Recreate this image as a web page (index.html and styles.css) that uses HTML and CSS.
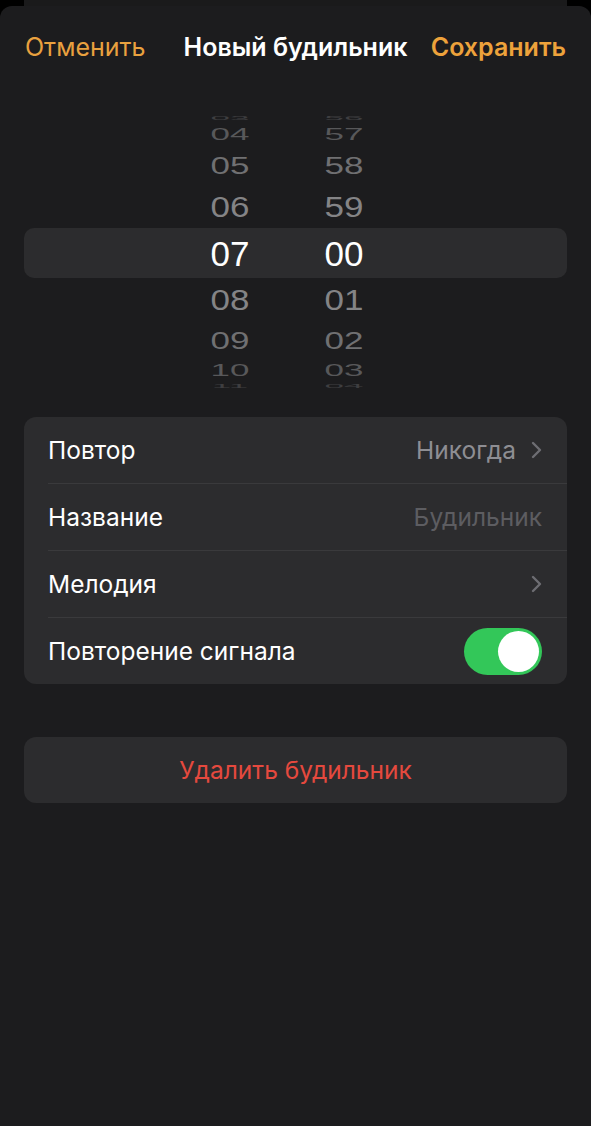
FILE: index.html
```html
<!DOCTYPE html>
<html lang="ru">

<head>
    <meta charset="UTF-8">
    <meta name="viewport" content="width=device-width, initial-scale=1.0">
    <title>Новый будильник</title>
    <link rel="stylesheet" href="styles.css">
</head>

<body>

    <div class="peek">
        <div class="peek-card"></div>
    </div>

    <div class="sheet">
        <header class="nav">
            <span class="nav-cancel">Отменить</span>
            <span class="nav-title">Новый будильник</span>
            <span class="nav-save">Сохранить</span>
        </header>

        <div class="picker">
            <div class="pick-row edge"><span>03</span><span>56</span></div>
            <div class="pick-row far r04"><span>04</span><span>57</span></div>
            <div class="pick-row mid r05"><span>05</span><span>58</span></div>
            <div class="pick-row near"><span>06</span><span>59</span></div>
            <div class="pick-row selected"><span>07</span><span>00</span></div>
            <div class="pick-row near"><span>08</span><span>01</span></div>
            <div class="pick-row mid r09"><span>09</span><span>02</span></div>
            <div class="pick-row far r10"><span>10</span><span>03</span></div>
            <div class="pick-row edge"><span>11</span><span>04</span></div>
        </div>

        <div class="group">
            <div class="cell">
                <span class="cell-label">Повтор</span>
                <span class="cell-value">Никогда</span>
                <svg class="chevron" width="11" height="18" viewBox="0 0 11 18">
                    <path d="M2 2 L9 9 L2 16" fill="none" stroke="currentColor" stroke-width="2.4" stroke-linecap="round" stroke-linejoin="round"/>
                </svg>
            </div>
            <div class="cell">
                <span class="cell-label">Название</span>
                <span class="cell-placeholder">Будильник</span>
            </div>
            <div class="cell">
                <span class="cell-label">Мелодия</span>
                <svg class="chevron" width="11" height="18" viewBox="0 0 11 18">
                    <path d="M2 2 L9 9 L2 16" fill="none" stroke="currentColor" stroke-width="2.4" stroke-linecap="round" stroke-linejoin="round"/>
                </svg>
            </div>
            <div class="cell">
                <span class="cell-label">Повторение сигнала</span>
                <span class="toggle"><span class="knob"></span></span>
            </div>
        </div>

        <div class="group delete">
            <span>Удалить будильник</span>
        </div>
    </div>

</body>

</html>
```

FILE: styles.css
```css
body {
    margin: 0;
    background-color: #000;
    font-family: Inter, Roboto, sans-serif;
    color: #fff;
}

.peek {
    height: 6px;
    padding: 0 24px;
    overflow: hidden;
}

.peek-card {
    height: 20px;
    background-color: #1a1a1b;
}

.sheet {
    background-color: #1c1c1e;
    border-radius: 12px 12px 0 0;
    min-height: 1120px;
}

.nav {
    height: 82px;
    padding: 0 25px;
    display: grid;
    grid-template-columns: 1fr auto 1fr;
    align-items: center;
    font-size: 25px;
}

.nav-cancel {
    color: #e9a13f;
}

.nav-title {
    font-weight: 600;
}

.nav-save {
    justify-self: end;
    color: #eda23b;
    font-weight: 600;
}

/* time picker */
.picker {
    margin: 24px 24px 25px;
    font-family: "Liberation Sans", sans-serif;
    font-size: 35px;
}

.pick-row {
    display: grid;
    grid-template-columns: 166px 80px 34px 80px;
    grid-template-rows: minmax(0, 1fr);
    align-items: center;
}

.pick-row span {
    text-align: center;
    line-height: 1;
}

.pick-row span:first-child {
    grid-column: 2;
}

.pick-row span:last-child {
    grid-column: 4;
}

.edge {
    height: 12px;
    color: #3e3e40;
}

.edge span {
    transform: scaleY(0.15);
}

.r04 {
    height: 21px;
}

.r10 {
    height: 20px;
}

.far {
    color: #58585a;
}

.far span {
    transform: scaleY(0.45);
}

.r05 {
    height: 40px;
}

.r09 {
    height: 39px;
}

.mid {
    color: #707072;
}

.mid span {
    transform: scaleY(0.66);
}

.near {
    height: 43px;
    color: #848486;
}

.near span {
    transform: scaleY(0.82);
}

.selected {
    height: 50px;
    background-color: #2c2c2e;
    border-radius: 10px;
    color: #fff;
}

/* settings */
.group {
    margin: 0 24px;
    background-color: #2c2c2e;
    border-radius: 12px;
    padding-left: 24px;
}

.cell {
    height: 66px;
    display: flex;
    align-items: center;
    padding-right: 25px;
    font-size: 24.5px;
    border-bottom: 1px solid #3a3a3c;
}

.cell:last-child {
    border-bottom: none;
}

.cell-label {
    flex: 1;
}

.cell-value {
    color: #8e8e93;
}

.cell-placeholder {
    color: #5d5d61;
}

.chevron {
    color: #6d6d72;
    margin-left: 15px;
}

.toggle {
    width: 78px;
    height: 47px;
    border-radius: 24px;
    background-color: #33c759;
    display: flex;
    align-items: center;
    justify-content: flex-end;
    padding: 0 3px;
    box-sizing: border-box;
}

.knob {
    width: 41px;
    height: 41px;
    border-radius: 50%;
    background-color: #fff;
}

.delete {
    margin-top: 53px;
    padding: 0;
    height: 66px;
    display: flex;
    align-items: center;
    justify-content: center;
    font-size: 24.5px;
    color: #e5493e;
}
```
